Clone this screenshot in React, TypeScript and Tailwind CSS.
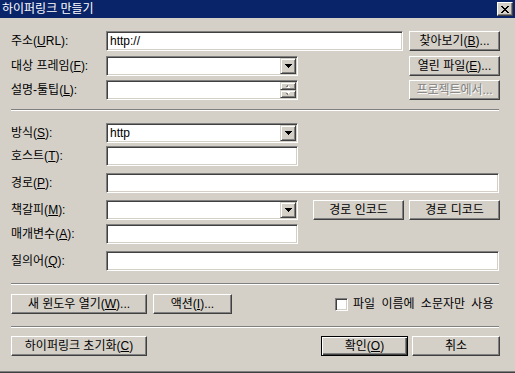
import type { ReactNode } from "react";

const font = "font-['Liberation_Sans','Noto_Sans_CJK_KR',sans-serif]";
const field =
  "bg-white border border-t-[#808080] border-l-[#808080] border-r-white border-b-white shadow-[inset_1px_1px_0_#404040,inset_-1px_-1px_0_#d4d0c8]";
const raised =
  "bg-[#d4d0c8] border border-t-white border-l-white border-r-[#404040] border-b-[#404040] shadow-[inset_-1px_-1px_0_#808080]";
const dropBtn =
  "bg-[#d4d0c8] border border-t-[#d4d0c8] border-l-[#d4d0c8] border-r-[#404040] border-b-[#404040] shadow-[inset_1px_1px_0_#fff,inset_-1px_-1px_0_#808080]";

function Label({ children }: { children: ReactNode }) {
  return <div className="w-[95px] shrink-0 whitespace-pre">{children}</div>;
}

function Button({
  children,
  w,
  disabled,
  def,
}: {
  children: ReactNode;
  w: string;
  disabled?: boolean;
  def?: boolean;
}) {
  const cls = def
    ? "bg-[#d4d0c8] border border-black shadow-[inset_1px_1px_0_#fff,inset_-1px_-1px_0_#404040,inset_-2px_-2px_0_#808080]"
    : raised;
  return (
    <div
      className={`${cls} ${w} h-[20px] shrink-0 flex items-center justify-center whitespace-pre ${
        disabled ? "text-[#808080] [text-shadow:1px_1px_0_#fff]" : ""
      }`}
    >
      {children}
    </div>
  );
}

function Arrow() {
  return (
    <svg width="7" height="4" viewBox="0 0 7 4" shapeRendering="crispEdges">
      <rect x="0" y="0" width="7" height="1" fill="#000" />
      <rect x="1" y="1" width="5" height="1" fill="#000" />
      <rect x="2" y="2" width="3" height="1" fill="#000" />
      <rect x="3" y="3" width="1" height="1" fill="#000" />
    </svg>
  );
}

function Select({ value }: { value?: string }) {
  return (
    <div className={`${field} w-[192px] h-[20px] p-[1px] flex items-center shrink-0`}>
      <div className="flex-1 pl-[2px] leading-none">{value}</div>
      <div className={`${dropBtn} w-[16px] h-[16px] flex items-center justify-center`}>
        <Arrow />
      </div>
    </div>
  );
}

function SpinArrow({ up }: { up?: boolean }) {
  return (
    <svg width="6" height="4" viewBox="0 0 6 4" shapeRendering="crispEdges">
      <g transform={up ? "" : "scale(1,-1) translate(0,-4)"}>
        <rect x="2" y="1" width="1" height="1" fill="#808080" />
        <rect x="1" y="2" width="3" height="1" fill="#808080" />
        <rect x="3" y="2" width="1" height="1" fill="#fff" />
        <rect x="2" y="3" width="3" height="1" fill="#fff" />
      </g>
    </svg>
  );
}

function Spin() {
  return (
    <div className={`${field} w-[192px] h-[20px] p-[1px] flex shrink-0`}>
      <div className="flex-1" />
      <div className="w-[16px] flex flex-col">
        <div className={`${dropBtn} h-[8px] flex items-center justify-center`}>
          <SpinArrow up />
        </div>
        <div className={`${dropBtn} h-[8px] flex items-center justify-center`}>
          <SpinArrow />
        </div>
      </div>
    </div>
  );
}

function Input({ w, value }: { w: string; value?: string }) {
  return (
    <div className={`${field} ${w} h-[20px] flex items-center pl-[3px] shrink-0 leading-none`}>
      {value}
    </div>
  );
}

function Sep() {
  return <div className="w-[488px] h-[2px] border-t border-t-[#808080] border-b border-b-white" />;
}

export default function App() {
  return (
    <div
      className={`${font} w-[515px] h-[373px] bg-[#d4d0c8] text-[12px] leading-none text-black flex flex-col border-b border-b-[#404040] shadow-[inset_0_-1px_0_#808080] overflow-hidden`}
    >
      {/* 제목 표시줄 */}
      <div className="h-[18px] bg-[#0a246a] flex items-center pl-[2px] pr-[2px] shrink-0">
        <span className="text-white text-[12px] whitespace-pre">하이퍼링크 만들기</span>
        <div className={`${raised} ml-auto w-[16px] h-[14px] flex items-center justify-center`}>
          <svg width="8" height="7" viewBox="0 0 8 7" shapeRendering="crispEdges">
            <path
              d="M0 0h2v1h-2zM6 0h2v1h-2zM1 1h2v1h-2zM5 1h2v1h-2zM2 2h4v1h-4zM3 3h2v1h-2zM2 4h4v1h-4zM1 5h2v1h-2zM5 5h2v1h-2zM0 6h2v1h-2zM6 6h2v1h-2z"
              fill="#000"
            />
          </svg>
        </div>
      </div>

      <div className="pl-[11px] pr-[15px] flex flex-col">
        <div className="mt-[13px] h-[20px] flex items-center">
          <Label>
            주소(<u>U</u>RL):
          </Label>
          <Input w="w-[297px]" value="http://" />
          <div className="ml-[6px]">
            <Button w="w-[91px]">
              <span>
                찾아보기(<u>B</u>)...
              </span>
            </Button>
          </div>
        </div>

        <div className="mt-[5px] h-[20px] flex items-center">
          <Label>
            대상 프레임(<u>F</u>):
          </Label>
          <Select />
          <div className="ml-auto">
            <Button w="w-[91px]">
              <span>
                열린 파일(<u>E</u>)...
              </span>
            </Button>
          </div>
        </div>

        <div className="mt-[4px] h-[20px] flex items-center">
          <Label>
            설명-툴팁(<u>L</u>):
          </Label>
          <Spin />
          <div className="ml-auto">
            <Button w="w-[91px]" disabled>
              프로젝트에서...
            </Button>
          </div>
        </div>

        <div className="mt-[9px]">
          <Sep />
        </div>

        <div className="mt-[12px] h-[20px] flex items-center">
          <Label>
            방식(<u>S</u>):
          </Label>
          <Select value="http" />
        </div>

        <div className="mt-[3px] h-[20px] flex items-center">
          <Label>
            호스트(<u>T</u>):
          </Label>
          <Input w="w-[192px]" />
        </div>

        <div className="mt-[7px] h-[20px] flex items-center">
          <Label>
            경로(<u>P</u>):
          </Label>
          <Input w="w-[393px]" />
        </div>

        <div className="mt-[7px] h-[20px] flex items-center">
          <Label>
            책갈피(<u>M</u>):
          </Label>
          <Select />
          <div className="ml-[15px]">
            <Button w="w-[91px]">경로 인코드</Button>
          </div>
          <div className="ml-[5px]">
            <Button w="w-[91px]">경로 디코드</Button>
          </div>
        </div>

        <div className="mt-[4px] h-[20px] flex items-center">
          <Label>
            매개변수(<u>A</u>):
          </Label>
          <Input w="w-[192px]" />
        </div>

        <div className="mt-[7px] h-[20px] flex items-center">
          <Label>
            질의어(<u>Q</u>):
          </Label>
          <Input w="w-[393px]" />
        </div>

        <div className="mt-[12px]">
          <Sep />
        </div>

        <div className="mt-[9px] h-[20px] flex items-center">
          <Button w="w-[136px]">
            <span>
              새 윈도우 열기(<u>W</u>)...
            </span>
          </Button>
          <div className="ml-[6px]">
            <Button w="w-[79px]">
              <span>
                액션(<u>I</u>)...
              </span>
            </Button>
          </div>
          <div className="ml-[103px] flex items-center">
            <div className={`${field} w-[13px] h-[13px]`} />
            <span className="ml-[5px] whitespace-pre [word-spacing:3px]">파일 이름에 소문자만 사용</span>
          </div>
        </div>

        <div className="mt-[12px]">
          <Sep />
        </div>

        <div className="mt-[8px] h-[20px] flex items-center">
          <Button w="w-[136px]">
            <span>
              하이퍼링크 초기화(<u>C</u>)
            </span>
          </Button>
          <div className="ml-auto">
            <Button w="w-[87px]" def>
              <span>
                확인(<u>O</u>)
              </span>
            </Button>
          </div>
          <div className="ml-[4px]">
            <Button w="w-[88px]">취소</Button>
          </div>
        </div>
      </div>
    </div>
  );
}
